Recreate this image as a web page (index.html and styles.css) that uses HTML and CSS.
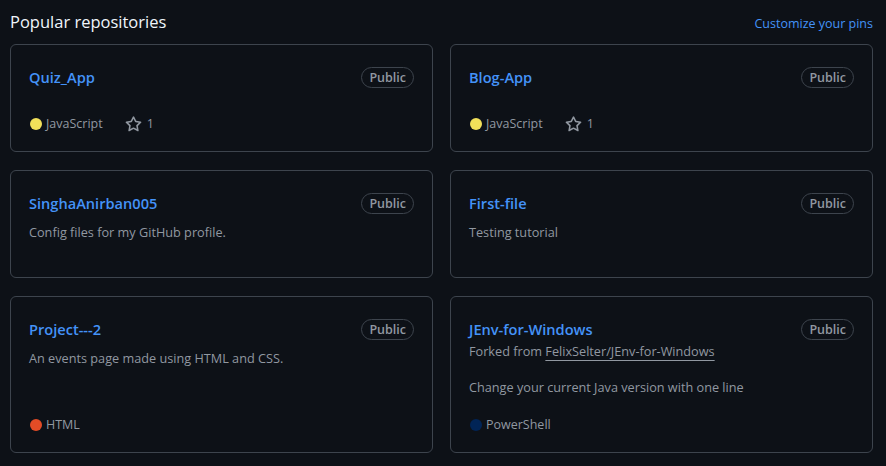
FILE: index.html
```html
<!DOCTYPE html>
<html lang="en">
<head>
<meta charset="utf-8">
<title>Popular repositories</title>
<link rel="stylesheet" href="styles.css">
</head>
<body>
<div class="page">
  <div class="head">
    <h2 class="head-title">Popular repositories</h2>
    <a class="head-link" href="#">Customize your pins</a>
  </div>
  <ol class="pins">
    <li class="card">
      <div class="card-top"><a class="repo" href="#">Quiz_App</a><span class="label">Public</span></div>
      <p class="meta"><span class="lang"><span class="dot dot-js"></span>JavaScript</span><a class="stars" href="#"><svg class="star" viewBox="0 0 16 16" width="16" height="16"><path d="M8 .25a.75.75 0 0 1 .673.418l1.882 3.815 4.21.612a.75.75 0 0 1 .416 1.279l-3.046 2.97.719 4.192a.751.751 0 0 1-1.088.791L8 12.347l-3.766 1.980a.75.75 0 0 1-1.088-.79l.72-4.194L.818 6.374a.75.75 0 0 1 .416-1.28l4.21-.611L7.327.668A.75.75 0 0 1 8 .25Zm0 2.445L6.615 5.5a.75.75 0 0 1-.564.41l-3.097.45 2.24 2.184a.75.75 0 0 1 .216.664l-.528 3.084 2.769-1.456a.75.75 0 0 1 .698 0l2.77 1.456-.53-3.084a.75.75 0 0 1 .216-.664l2.24-2.183-3.096-.45a.75.75 0 0 1-.564-.41L8 2.694Z"/></svg>1</a></p>
    </li>
    <li class="card">
      <div class="card-top"><a class="repo" href="#">Blog-App</a><span class="label">Public</span></div>
      <p class="meta"><span class="lang"><span class="dot dot-js"></span>JavaScript</span><a class="stars" href="#"><svg class="star" viewBox="0 0 16 16" width="16" height="16"><path d="M8 .25a.75.75 0 0 1 .673.418l1.882 3.815 4.21.612a.75.75 0 0 1 .416 1.279l-3.046 2.97.719 4.192a.751.751 0 0 1-1.088.791L8 12.347l-3.766 1.980a.75.75 0 0 1-1.088-.79l.72-4.194L.818 6.374a.75.75 0 0 1 .416-1.28l4.21-.611L7.327.668A.75.75 0 0 1 8 .25Zm0 2.445L6.615 5.5a.75.75 0 0 1-.564.41l-3.097.45 2.24 2.184a.75.75 0 0 1 .216.664l-.528 3.084 2.769-1.456a.75.75 0 0 1 .698 0l2.77 1.456-.53-3.084a.75.75 0 0 1 .216-.664l2.24-2.183-3.096-.45a.75.75 0 0 1-.564-.41L8 2.694Z"/></svg>1</a></p>
    </li>
    <li class="card">
      <div class="card-top"><a class="repo" href="#">SinghaAnirban005</a><span class="label">Public</span></div>
      <p class="desc">Config files for my GitHub profile.</p>
    </li>
    <li class="card">
      <div class="card-top"><a class="repo" href="#">First-file</a><span class="label">Public</span></div>
      <p class="desc">Testing tutorial</p>
    </li>
    <li class="card">
      <div class="card-top"><a class="repo" href="#">Project---2</a><span class="label">Public</span></div>
      <p class="desc">An events page made using HTML and CSS.</p>
      <p class="meta"><span class="lang"><span class="dot dot-html"></span>HTML</span></p>
    </li>
    <li class="card">
      <div class="card-top"><a class="repo" href="#">JEnv-for-Windows</a><span class="label">Public</span></div>
      <p class="fork">Forked from <a class="fork-link" href="#">FelixSelter/JEnv-for-Windows</a></p>
      <p class="desc">Change your current Java version with one line</p>
      <p class="meta"><span class="lang"><span class="dot dot-ps"></span>PowerShell</span></p>
    </li>
  </ol>
</div>
</body>
</html>
```

FILE: styles.css
```css
* { box-sizing: border-box; }

html, body {
  margin: 0;
  background: #0d1117;
}

body {
  font-family: "Open Sans", "Noto Sans", "Liberation Sans", sans-serif;
  color: #f0f6fc;
}

.page {
  padding: 9px 13px 0 10px;
}

.head {
  display: flex;
  justify-content: space-between;
  align-items: flex-end;
  margin-bottom: 9px;
}

.head-title {
  margin: 0;
  font-size: 16.5px;
  font-weight: 400;
  line-height: 26px;
  color: #f0f6fc;
}

.head-link {
  font-size: 12.5px;
  line-height: 22px;
  color: #4493f8;
  text-decoration: none;
}

.pins {
  list-style: none;
  margin: 0;
  padding: 0;
  display: grid;
  grid-template-columns: 1fr 1fr;
  column-gap: 17px;
  row-gap: 18px;
}

.card {
  display: flex;
  flex-direction: column;
  min-height: 108px;
  border: 1px solid #3d444d;
  border-radius: 6px;
  padding: 19px 18px 17px 18px;
}

.card-top {
  display: flex;
  justify-content: space-between;
  align-items: center;
  height: 26px;
}

.repo {
  font-size: 14.6px;
  font-weight: 600;
  color: #4493f8;
  text-decoration: none;
}

.label {
  display: inline-block;
  height: 21px;
  padding: 0 7px;
  border: 1px solid #3d444d;
  border-radius: 2em;
  font-size: 12.5px;
  font-weight: 600;
  line-height: 19px;
  color: #9198a1;
}

.desc {
  margin: 6px 0 0;
  font-size: 12.7px;
  line-height: 20px;
  color: #9198a1;
}

.fork {
  margin: 0 0 11px;
  font-size: 12.7px;
  line-height: 18px;
  color: #9198a1;
}

.fork-link {
  color: #9198a1;
  text-decoration: underline;
  text-underline-offset: 4px;
}

.meta {
  display: flex;
  align-items: center;
  margin: auto 0 0;
  padding-top: 18px;
  font-size: 12.5px;
  line-height: 20px;
  color: #9198a1;
}

.lang {
  display: inline-flex;
  align-items: center;
}

.dot {
  display: inline-block;
  width: 12px;
  height: 12px;
  border-radius: 50%;
  margin: 0 4px 0 1px;
}

.dot-js { background: #f1e05a; }
.dot-html { background: #e34c26; }
.dot-ps { background: #012456; }

.stars {
  display: inline-flex;
  align-items: center;
  margin-left: 22px;
  color: #9198a1;
  text-decoration: none;
}

.star {
  width: 17px;
  height: 17px;
  margin-right: 5px;
  fill: #9198a1;
}
```
